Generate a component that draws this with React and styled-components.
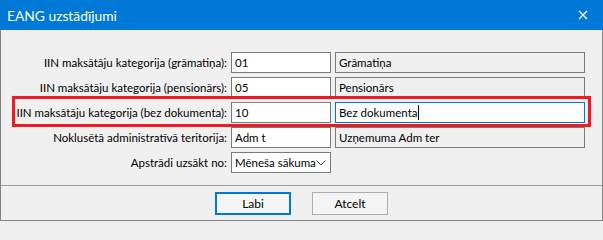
import React from 'react';
import styled, { createGlobalStyle } from 'styled-components';

const GlobalStyle = createGlobalStyle`
    html, body {
        margin: 0;
        padding: 0;
        background: #f0f0f0;
    }
    * {
        box-sizing: border-box;
    }`;

const Window = styled.div`
    width: 603px;
    height: 221px;
    display: flex;
    flex-direction: column;
    background: #f0f0f0;
    border: 1px solid #838383;
    border-top: none;
    font-family: Lato, "Liberation Sans", Arial, sans-serif;
    font-size: 11.5px;
    color: #000`;

const TitleBar = styled.div`
    height: 30px;
    margin: 0 -1px;
    display: flex;
    align-items: center;
    justify-content: space-between;
    padding: 0 15px 0 7px;
    background: #0078d7;
    color: #fff;
    font-size: 13.8px`;

const CloseIcon = styled.svg`
    width: 10px;
    height: 10px`;

const Body = styled.div`
    position: relative;
    flex: 1;
    padding: 22px 0 0 0;
    border-bottom: 1px solid #a0a0a0`;

const Form = styled.div`
    display: grid;
    grid-template-columns: 226px 100px 250px;
    grid-auto-rows: 21px;
    column-gap: 4px;
    row-gap: 4px`;

const Label = styled.label`
    display: flex;
    align-items: center;
    justify-content: flex-end;
    white-space: nowrap`;

const Field = styled.div`
    display: flex;
    align-items: center;
    padding: 0 3px;
    border: 1px solid ${p => (p.$focused ? '#0078d7' : '#7a7a7a')};
    background: ${p => (p.$readOnly ? '#f0f0f0' : '#fff')};
    white-space: nowrap;
    overflow: hidden`;

const Caret = styled.span`
    display: inline-block;
    width: 1px;
    height: 15px;
    margin-left: 1px;
    background: #000`;

const Select = styled(Field)`
    justify-content: space-between;
    padding-right: 4px;

    svg {
        flex-shrink: 0;
    }`;

const Highlight = styled.div`
    position: absolute;
    left: 11px;
    top: 66px;
    width: 579px;
    height: 31px;
    border: 3px solid #ed1c24;
    pointer-events: none`;

const Footer = styled.div`
    height: 34px;
    display: flex;
    justify-content: center;
    align-items: flex-start;
    gap: 21px;
    padding-top: 6px`;

const Button = styled.button`
    width: 76px;
    height: 23px;
    padding: 0;
    font-family: inherit;
    font-size: 12px;
    color: #000;
    background: #f5f5f5;
    border: ${p => (p.$primary ? '2px solid #0078d7' : '1px solid #adadad')}`;

const rows = [
    { label: 'IIN maksātāju kategorija (grāmatiņa):', code: '01', name: 'Grāmatiņa' },
    { label: 'IIN maksātāju kategorija (pensionārs):', code: '05', name: 'Pensionārs' },
    { label: 'IIN maksātāju kategorija (bez dokumenta):', code: '10', name: 'Bez dokumenta', focused: true },
    { label: 'Noklusētā administratīvā teritorija:', code: 'Adm t', name: 'Uzņemuma Adm ter' },
];

export default function App() {
    return (
        <>
            <GlobalStyle />
            <Window>
                <TitleBar>
                    <span>EANG uzstādījumi</span>
                    <CloseIcon viewBox="0 0 10 10">
                        <path d="M1 1 L9 9 M9 1 L1 9" stroke="#fff" strokeWidth="1.2" fill="none" />
                    </CloseIcon>
                </TitleBar>
                <Body>
                    <Form>
                        {rows.map(r => (
                            <React.Fragment key={r.label}>
                                <Label>{r.label}</Label>
                                <Field>{r.code}</Field>
                                <Field $readOnly={!r.focused} $focused={r.focused}>
                                    {r.name}
                                    {r.focused && <Caret />}
                                </Field>
                            </React.Fragment>
                        ))}
                        <Label>Apstrādi uzsākt no:</Label>
                        <Select>
                            <span>Mēneša sākuma</span>
                            <svg width="10" height="6" viewBox="0 0 10 6">
                                <path d="M0.5 0.5 L5 5 L9.5 0.5" stroke="#444" strokeWidth="0.9" fill="none" />
                            </svg>
                        </Select>
                    </Form>
                    <Highlight />
                </Body>
                <Footer>
                    <Button $primary>Labi</Button>
                    <Button>Atcelt</Button>
                </Footer>
            </Window>
        </>
    );
}
